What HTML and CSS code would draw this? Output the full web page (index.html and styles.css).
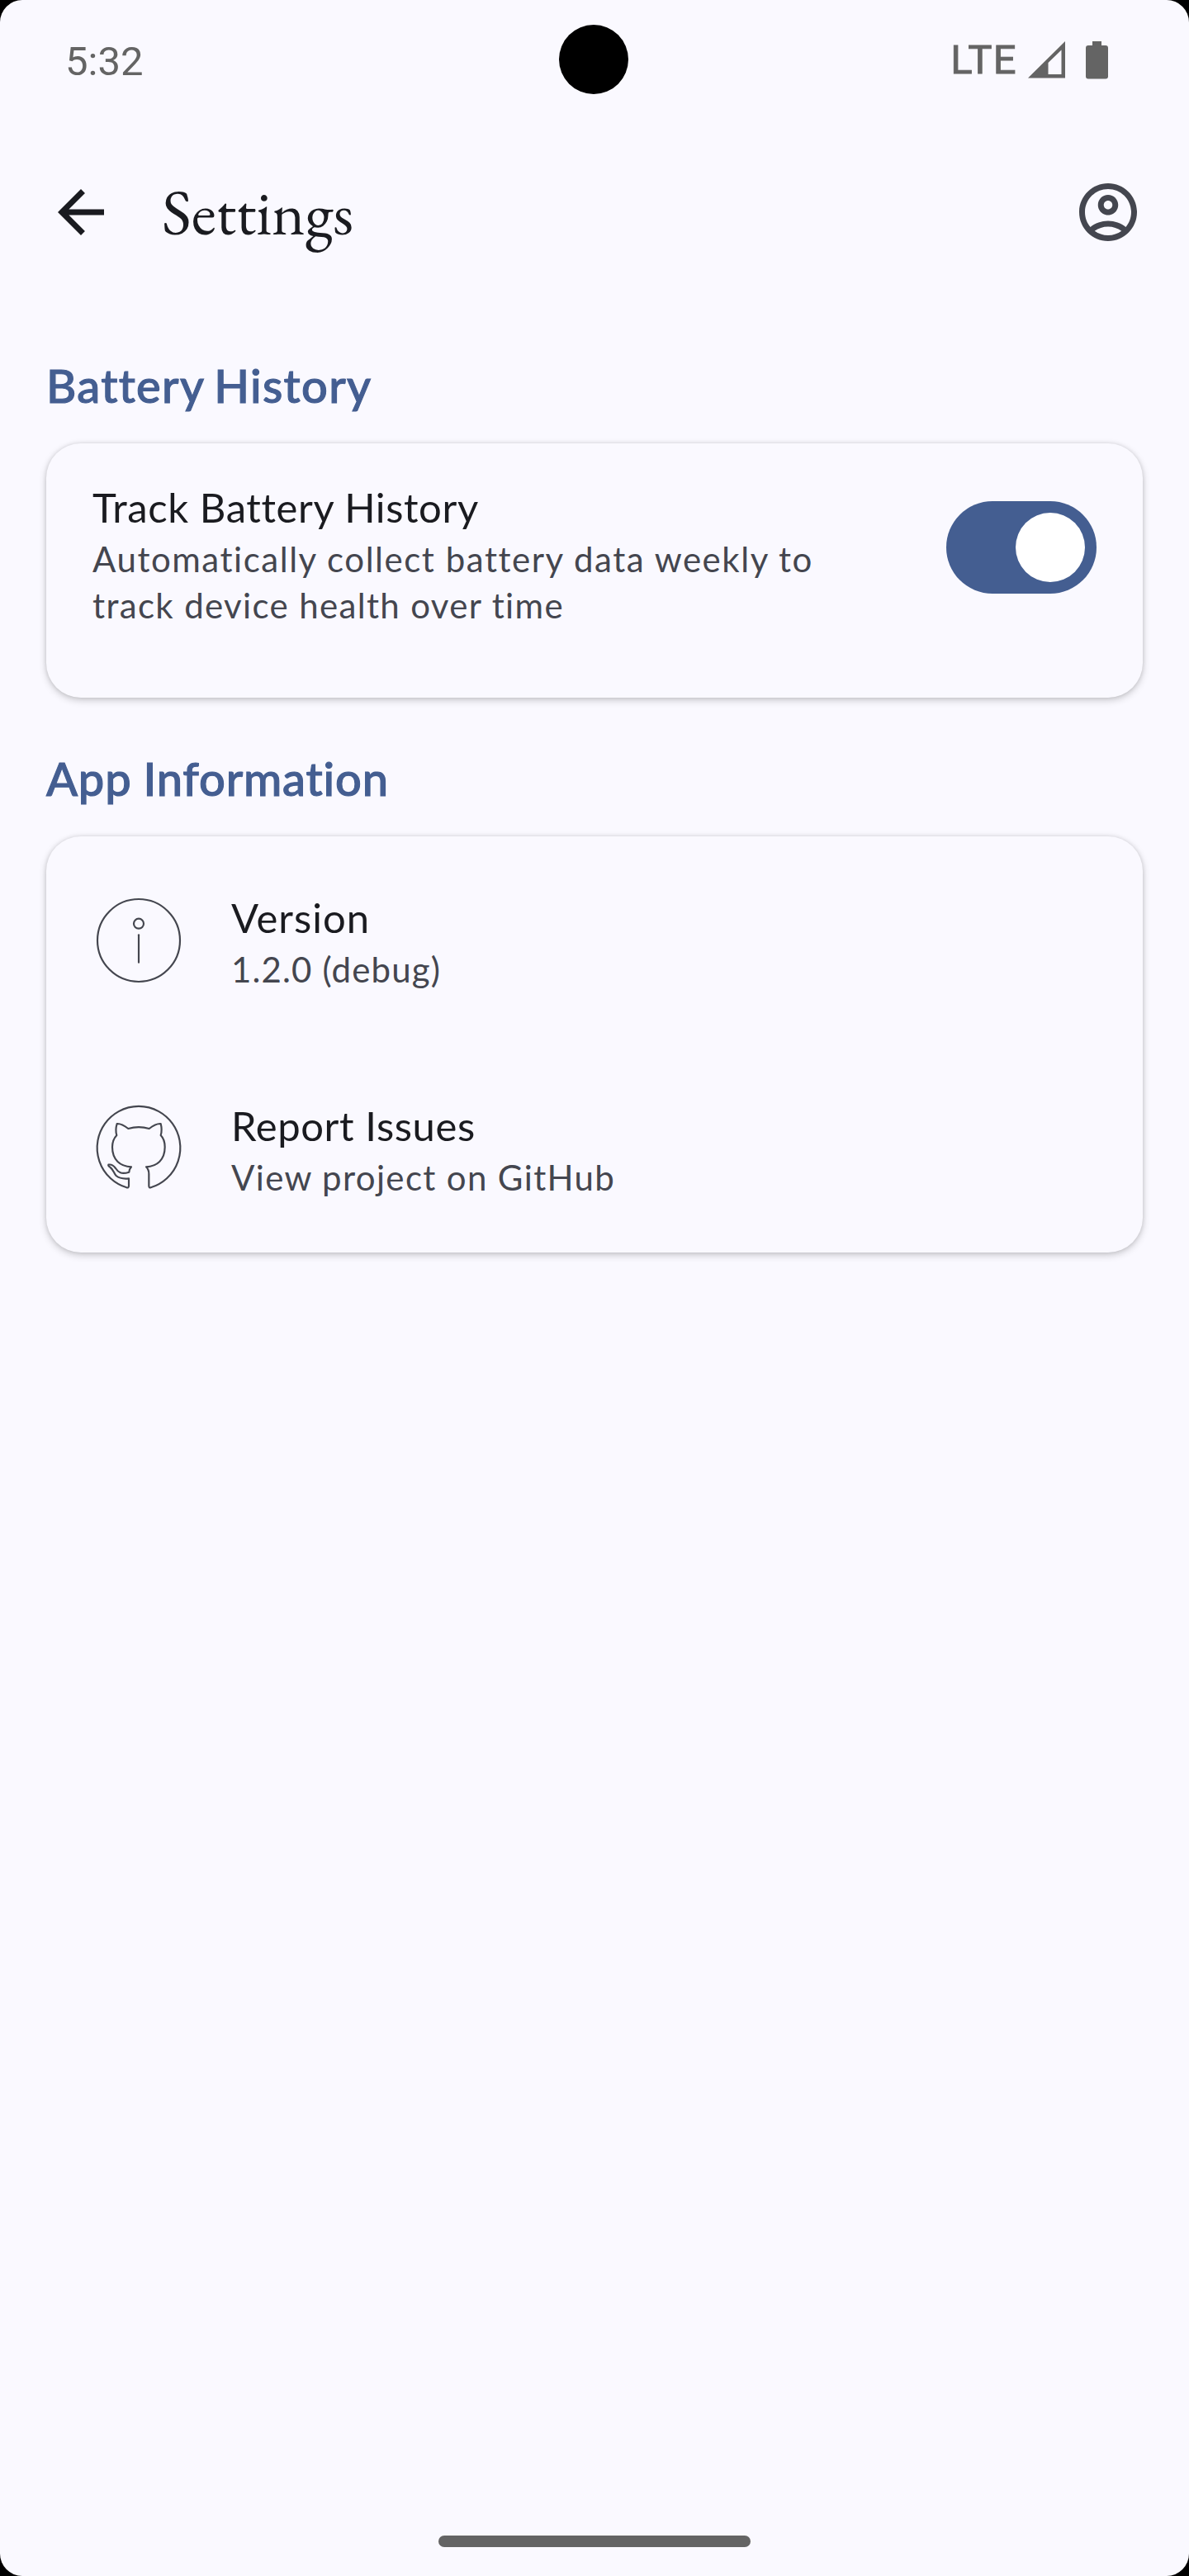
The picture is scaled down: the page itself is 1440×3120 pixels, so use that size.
FILE: index.html
```html
<!DOCTYPE html>
<html lang="en">
<head>
<meta charset="utf-8">
<title>Settings</title>
<link rel="stylesheet" href="styles.css">
</head>
<body>
<div class="screen">
  <header class="status-bar">
    <span class="clock">5:32</span>
    <span class="camera"></span>
    <div class="status-icons">
      <span class="network">LTE</span>
      <svg class="signal" viewBox="0 0 45 45"><path fill-rule="evenodd" d="M45 0V44.500H0ZM24.500 26V40H40.500V10.500Z"/></svg>
      <svg class="battery" viewBox="0 0 27 46"><path d="M8 0h11v5h5a3 3 0 0 1 3 3v34.500a3 3 0 0 1-3 3H3a3 3 0 0 1-3-3V8a3 3 0 0 1 3-3h5z"/></svg>
    </div>
  </header>
  <nav class="app-bar">
    <svg class="icon back" viewBox="0 0 24 24"><path d="M20 11H7.830l5.590-5.590L12 4l-8 8 8 8 1.410-1.410L7.830 13H20z"/></svg>
    <h1 class="title">Settings</h1>
    <svg class="icon account" viewBox="0 0 24 24"><path d="M12 2C6.480 2 2 6.480 2 12s4.480 10 10 10 10-4.480 10-10S17.520 2 12 2zM7.350 18.500C8.660 17.560 10.260 17 12 17s3.340.56 4.650 1.500C15.340 19.440 13.740 20 12 20s-3.340-.56-4.650-1.500zm10.790-1.380C16.450 15.800 14.320 15 12 15s-4.450.8-6.140 2.120C4.700 15.730 4 13.950 4 12c0-4.420 3.580-8 8-8s8 3.580 8 8c0 1.950-.7 3.730-1.860 5.120z"/><path d="M12 6c-1.930 0-3.500 1.570-3.500 3.500S10.070 13 12 13s3.500-1.570 3.500-3.500S13.930 6 12 6zm0 5c-.83 0-1.500-.67-1.500-1.500S11.170 8 12 8s1.500.67 1.500 1.500S12.830 11 12 11z"/></svg>
  </nav>
  <main class="content">
    <h2 class="section-title section-title-wide">Battery History</h2>
    <section class="card card-toggle">
      <div class="texts">
        <div class="item-title">Track Battery History</div>
        <div class="item-sub"><span class="lead">Automatically collect battery data weekly to</span><br>track device health over time</div>
      </div>
      <div class="switch"><span class="thumb"></span></div>
    </section>
    <h2 class="section-title">App Information</h2>
    <section class="card">
      <div class="row">
        <svg class="row-icon" viewBox="36 39 336 336"><circle cx="204" cy="207" r="150"/><circle cx="204" cy="146" r="18"/><path d="M204 187V287"/></svg>
        <div class="texts">
          <div class="item-title item-title-wide">Version</div>
          <div class="item-sub version">1.2.0 (debug)</div>
        </div>
      </div>
      <div class="row">
        <svg class="row-icon" viewBox="36 45 336 336"><path d="M168 322V349Q168 357 160 355A151 151 0 1 1 248 355Q241 357 241 349V306Q241 290 231 280C270 278 299 255 299 208Q299 180 284 165Q290 146 284 123C270 122 256 130 242 141Q204 130 166 141C152 130 138 122 125 123Q118 146 124 165Q108 182 108 208C108 255 137 278 177 280Q170 288 169 299C140 308 130 300 120 285C112 274 104 270 94 272C92 276 96 278 101 282C112 290 113 302 122 312C134 322 150 324 168 322Z"/></svg>
        <div class="texts">
          <div class="item-title">Report Issues</div>
          <div class="item-sub">View project on GitHub</div>
        </div>
      </div>
    </section>
  </main>
  <footer class="nav-bar"><span class="handle"></span></footer>
</div>
</body>
</html>
```
FILE: styles.css
```css
* { box-sizing: border-box; }
body {
  margin: 0;
  background: #000;
  font-family: Lato, "Liberation Sans", sans-serif;
  font-variant-ligatures: none;
}
.screen {
  display: flex;
  flex-direction: column;
  width: 1440px;
  height: 3120px;
  overflow: hidden;
  border-radius: 27px;
  background: #faf9ff;
}
.status-bar {
  display: grid;
  grid-template-columns: 598px 84px 1fr;
  align-items: center;
  height: 145px;
  padding: 0 98px 1px 79px;
  color: #646464;
  font-family: Roboto, "Liberation Sans", sans-serif;
  font-size: 49px;
}
.clock { padding-top: 5px; line-height: 60px; }
.camera { width: 84px; height: 84px; border-radius: 50%; background: #000; }
.status-icons { display: flex; justify-content: flex-end; align-items: center; padding-top: 1px; fill: #646464; }
.network { line-height: 60px; letter-spacing: 1.3px; -webkit-text-stroke: .9px #646464; }
.signal { width: 45px; height: 45px; margin-left: 13px; }
.battery { width: 27px; height: 46px; margin-left: 25px; }
.app-bar {
  display: flex;
  align-items: center;
  height: 224px;
  padding: 0 56px;
}
.icon { width: 84px; height: 84px; }
.back { fill: #1a1b20; }
.account { fill: #44464f; }
.title {
  flex: 1;
  margin: 0 0 0 56px;
  color: #1a1b20;
  font: 400 77px/98px "EB Garamond", "Liberation Serif", serif;
  font-variant-ligatures: none;
}
.content { flex: 1; padding: 56px 56px 0; }
.section-title {
  margin: 0 0 28px;
  color: #445e91;
  font-size: 56px;
  font-weight: 500;
  line-height: 84px;
  letter-spacing: .8px;
  word-spacing: -1px;
  -webkit-text-stroke: 1.1px #445e91;
}
.section-title-wide { letter-spacing: 1.3px; word-spacing: -3px; }
.card {
  margin-bottom: 56px;
  border-radius: 42px;
  background: #faf9ff;
  box-shadow: 0 3px 10px rgba(0, 0, 0, .2), 0 0 5px rgba(0, 0, 0, .1);
}
.card-toggle {
  display: flex;
  justify-content: space-between;
  height: 308px;
  padding: 42px 56px 0;
}
.item-title { color: #1a1b20; font-size: 49px; line-height: 70px; letter-spacing: .6px; }
.item-title-wide { letter-spacing: 1px; }
.item-sub { color: #44464f; font-size: 42px; line-height: 56px; letter-spacing: 1.35px; }
.lead { letter-spacing: 1.54px; }
.version { letter-spacing: 1.13px; }
.switch {
  display: flex;
  justify-content: flex-end;
  width: 182px;
  height: 112px;
  margin-top: 28px;
  padding: 14px;
  border-radius: 56px;
  background: #445e91;
}
.thumb { width: 84px; height: 84px; border-radius: 50%; background: #fff; }
.row { display: flex; align-items: center; gap: 56px; height: 252px; padding: 0 56px; }
.row-icon {
  width: 112px;
  height: 112px;
  fill: none;
  stroke: #44464f;
  stroke-width: 6.5;
  stroke-linecap: round;
  stroke-linejoin: round;
}
.nav-bar { display: flex; justify-content: center; height: 49px; }
.handle { width: 378px; height: 14px; border-radius: 7px; background: #646464; }
```
